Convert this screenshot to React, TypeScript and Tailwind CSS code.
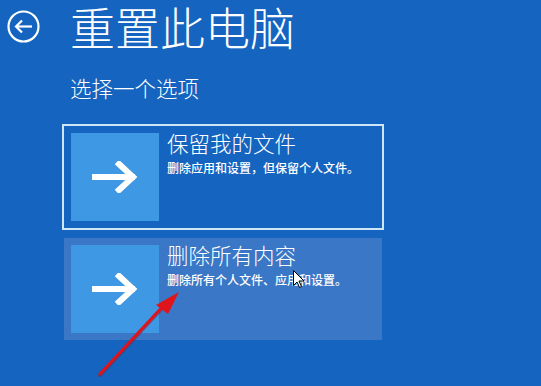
import React from "react";

const font = { fontFamily: '"Noto Sans CJK SC", "Noto Sans", sans-serif' };

function ArrowBox() {
  return (
    <div className="w-[88px] h-[88px] shrink-0 bg-[#3f98e4] flex items-center justify-center">
      <svg width="46" height="32" viewBox="0 0 46 32" fill="none">
        <path d="M3 16 H40" stroke="white" strokeWidth="6" strokeLinecap="square" />
        <path d="M27 3 L41 16 L27 29" stroke="white" strokeWidth="6" strokeLinecap="square" strokeLinejoin="miter" />
      </svg>
    </div>
  );
}

function Card({ title, desc, active }: { title: string; desc: string; active?: boolean }) {
  return (
    <div
      className={
        "w-[322px] h-[106px] border-2 p-[7px] flex gap-[8px] bg-clip-padding " +
        (active ? "border-[#cde6f7]" : "border-transparent bg-[#3a77c6]")
      }
    >
      <ArrowBox />
      <div className="flex flex-col -mt-[2px] text-white">
        <div className="text-[21.5px] leading-[24px] font-light whitespace-nowrap">{title}</div>
        <div className="text-[12px] leading-[16px] mt-[5px] font-medium whitespace-nowrap">{desc}</div>
      </div>
    </div>
  );
}

export default function App() {
  return (
    <div className="w-[541px] h-[386px] bg-[#1464c0] relative overflow-hidden flex" style={font}>
      <div className="w-[62px] shrink-0 pl-[7px] pt-[10px]">
        <svg width="33" height="33" viewBox="0 0 33 33" fill="none">
          <circle cx="16.5" cy="16.5" r="15" stroke="white" strokeWidth="2.2" />
          <path d="M9 16.5 H25" stroke="white" strokeWidth="2.2" />
          <path d="M15 10.5 L9 16.5 L15 22.5" stroke="white" strokeWidth="2.2" strokeLinejoin="miter" />
        </svg>
      </div>
      <div className="flex flex-col">
        <div className="pl-[8px] text-white text-[45px] leading-[54px] font-light whitespace-nowrap">重置此电脑</div>
        <div className="pl-[8px] mt-[20px] text-white text-[21.5px] leading-[28px] font-light whitespace-nowrap">选择一个选项</div>
        <div className="mt-[22px] flex flex-col gap-[6px]">
          <Card active title="保留我的文件" desc="删除应用和设置，但保留个人文件。" />
          <Card title="删除所有内容" desc="删除所有个人文件、应用和设置。" />
        </div>
      </div>

      {/* red annotation arrow */}
      <svg className="absolute left-0 top-0 pointer-events-none" width="541" height="386" viewBox="0 0 541 386">
        <line x1="100" y1="375" x2="166" y2="304" stroke="#8a1a2a" strokeWidth="4" strokeLinecap="round" opacity="0.5" />
        <line x1="100" y1="374" x2="166" y2="303" stroke="#e1141c" strokeWidth="3" strokeLinecap="round" />
        <polygon points="179,292 156,305 168,314" fill="#e1141c" />
      </svg>

      {/* mouse cursor */}
      <svg className="absolute left-[293px] top-[270px] pointer-events-none" width="12" height="19" viewBox="0 0 12 19">
        <path d="M0.5 0.5 L0.5 15.5 L4 12 L6.5 17.5 L8.5 16.5 L6 11 L11 11 Z" fill="white" stroke="black" strokeWidth="1" strokeLinejoin="round" />
      </svg>
    </div>
  );
}
